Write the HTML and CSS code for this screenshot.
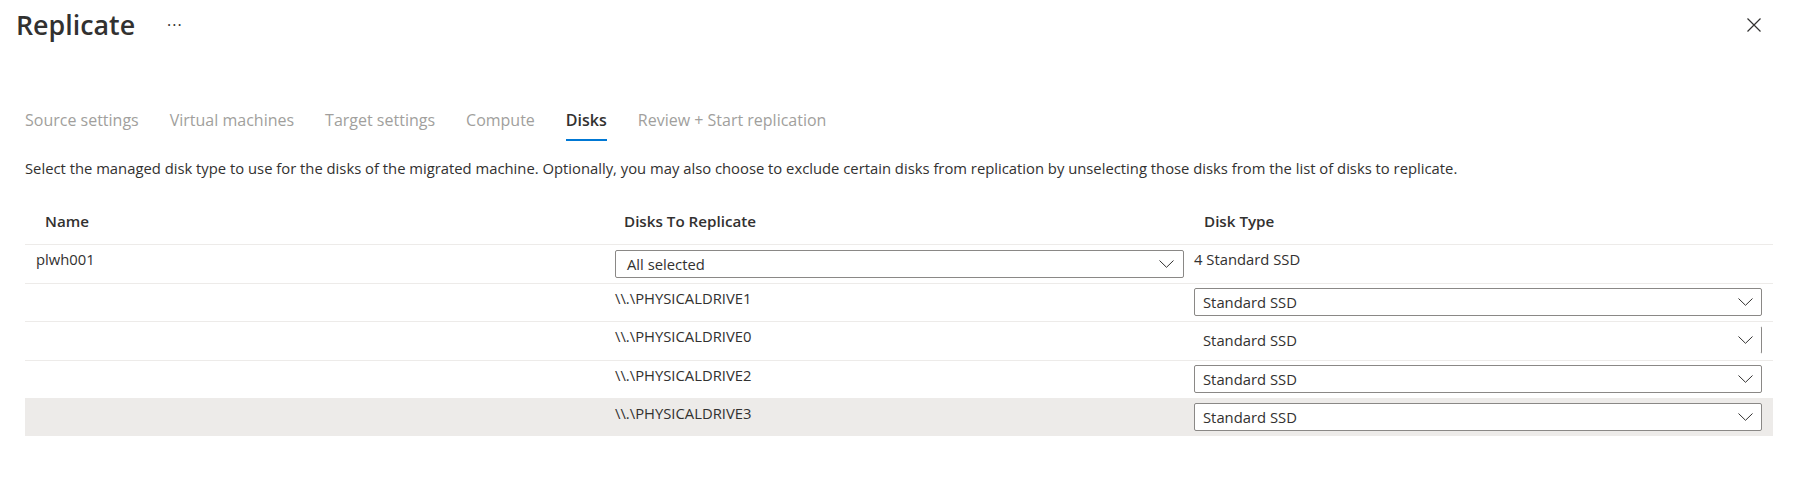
FILE: index.html
```html
<!DOCTYPE html>
<html>
<head>
<meta charset="utf-8">
<link rel="stylesheet" href="styles.css">
</head>
<body>
<div class="page">
  <header class="top">
    <h1 class="title">Replicate</h1>
    <span class="more">···</span>
    <span class="spacer"></span>
    <button class="close" aria-label="Close">
      <svg width="14" height="14" viewBox="0 0 14 14"><path d="M0.5 0.5 L13.5 13.5 M13.5 0.5 L0.5 13.5" stroke="#323130" stroke-width="1.2" fill="none"/></svg>
    </button>
  </header>

  <nav class="tabs">
    <span class="tab">Source settings</span>
    <span class="tab">Virtual machines</span>
    <span class="tab">Target settings</span>
    <span class="tab">Compute</span>
    <span class="tab active">Disks</span>
    <span class="tab">Review + Start replication</span>
  </nav>

  <p class="desc">Select the managed disk type to use for the disks of the migrated machine. Optionally, you may also choose to exclude certain disks from replication by unselecting those disks from the list of disks to replicate.</p>

  <div class="table">
    <div class="row head">
      <div class="cell">Name</div>
      <div class="cell">Disks To Replicate</div>
      <div class="cell">Disk Type</div>
    </div>
    <div class="row">
      <div class="cell text">plwh001</div>
      <div class="cell">
        <div class="select wide"><span>All selected</span><svg class="chev" width="15" height="8" viewBox="0 0 15 8"><path d="M0.5 0.5 L7.5 7.3 L14.5 0.5" stroke="#323130" stroke-width="1" fill="none"/></svg></div>
      </div>
      <div class="cell text">4 Standard SSD</div>
    </div>
    <div class="row">
      <div class="cell"></div>
      <div class="cell text">\\.\PHYSICALDRIVE1</div>
      <div class="cell">
        <div class="select"><span>Standard SSD</span><svg class="chev" width="15" height="8" viewBox="0 0 15 8"><path d="M0.5 0.5 L7.5 7.3 L14.5 0.5" stroke="#323130" stroke-width="1" fill="none"/></svg></div>
      </div>
    </div>
    <div class="row">
      <div class="cell"></div>
      <div class="cell text">\\.\PHYSICALDRIVE0</div>
      <div class="cell">
        <div class="select glitch"><span>Standard SSD</span><svg class="chev" width="15" height="8" viewBox="0 0 15 8"><path d="M0.5 0.5 L7.5 7.3 L14.5 0.5" stroke="#323130" stroke-width="1" fill="none"/></svg></div>
      </div>
    </div>
    <div class="row">
      <div class="cell"></div>
      <div class="cell text">\\.\PHYSICALDRIVE2</div>
      <div class="cell">
        <div class="select"><span>Standard SSD</span><svg class="chev" width="15" height="8" viewBox="0 0 15 8"><path d="M0.5 0.5 L7.5 7.3 L14.5 0.5" stroke="#323130" stroke-width="1" fill="none"/></svg></div>
      </div>
    </div>
    <div class="row hover">
      <div class="cell"></div>
      <div class="cell text">\\.\PHYSICALDRIVE3</div>
      <div class="cell">
        <div class="select"><span>Standard SSD</span><svg class="chev" width="15" height="8" viewBox="0 0 15 8"><path d="M0.5 0.5 L7.5 7.3 L14.5 0.5" stroke="#323130" stroke-width="1" fill="none"/></svg></div>
      </div>
    </div>
  </div>
</div>
</body>
</html>
```

FILE: styles.css
```css
* { box-sizing: border-box; }
html, body { margin: 0; padding: 0; background: #ffffff; }
body {
  font-family: "Open Sans", "Noto Sans", sans-serif;
  font-size: 14.8px;
  color: #323130;
}
.page { width: 1813px; height: 490px; overflow: hidden; }

.top {
  display: flex;
  align-items: center;
  height: 50px;
  padding-left: 16px;
  padding-right: 52px;
}
.title {
  margin: 0;
  font-size: 26.8px;
  font-weight: 600;
  line-height: 50px;
}
.more {
  margin-left: 32px;
  font-size: 16px;
  letter-spacing: 1px;
  line-height: 50px;
}
.spacer { flex: 1; }
.close {
  border: 0;
  background: none;
  padding: 0;
  width: 14px;
  height: 14px;
  display: flex;
}

.tabs {
  display: flex;
  gap: 31px;
  margin-top: 51px;
  padding-left: 25px;
  height: 40px;
}
.tab {
  font-size: 16px;
  color: #a19f9d;
  padding-top: 1px;
  line-height: 37px;
  height: 40px;
  border-bottom: 2px solid transparent;
}
.tab.active {
  color: #323130;
  font-weight: 600;
  border-bottom-color: #0078d4;
}

.desc {
  margin: 16px 0 0 25px;
  line-height: 22px;
  font-size: 14.8px;
}

.table {
  margin: 22px 0 0 25px;
  width: 1748px;
}
.row {
  display: grid;
  grid-template-columns: 579px 580px 1fr;
  height: 38.5px;
  border-bottom: 1px solid #edebe9;
}
.row.hover { background: #edebe9; border-bottom: 0; height: 37px; }
.cell { padding-left: 11px; }
.row .cell:nth-child(3) { padding-left: 10px; padding-right: 11px; }
.row.head {
  height: 44px;
  font-weight: 600;
  font-size: 15.2px;
}
.row.head .cell,
.row.head .cell:nth-child(3) {
  padding-left: 20px;
  padding-top: 10px;
  line-height: 20px;
}
.cell.text {
  padding-top: 4px;
  line-height: 20px;
}
.select {
  margin-top: 4px;
  height: 28px;
  border: 1px solid #8a8886;
  border-radius: 2px;
  background: #ffffff;
  display: flex;
  align-items: center;
  padding-left: 8px;
  padding-right: 8px;
}
.select span { flex: 1; }
.select.wide { margin-top: 5px; padding-left: 11px; padding-right: 9px; }
.select.glitch {
  border-top-color: transparent;
  border-bottom-color: transparent;
  border-left-color: transparent;
}
.chev { display: block; }
```
